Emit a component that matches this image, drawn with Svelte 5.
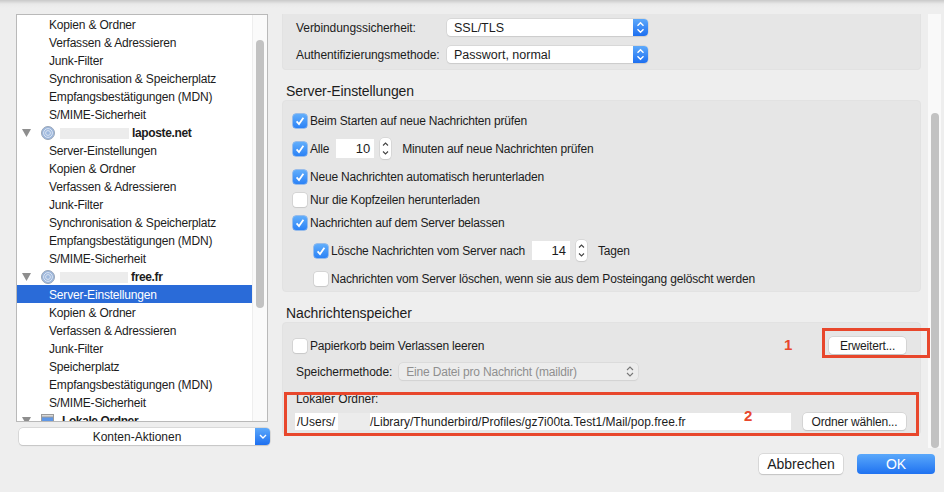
<script>
	const tree = [
		{label: "Kopien & Ordner"},
		{label: "Verfassen & Adressieren"},
		{label: "Junk-Filter"},
		{label: "Synchronisation & Speicherplatz"},
		{label: "Empfangsbestätigungen (MDN)"},
		{label: "S/MIME-Sicherheit"},
		{account: "laposte.net", blank: 69},
		{label: "Server-Einstellungen"},
		{label: "Kopien & Ordner"},
		{label: "Verfassen & Adressieren"},
		{label: "Junk-Filter"},
		{label: "Synchronisation & Speicherplatz"},
		{label: "Empfangsbestätigungen (MDN)"},
		{label: "S/MIME-Sicherheit"},
		{account: "free.fr", blank: 68},
		{label: "Server-Einstellungen", selected: true},
		{label: "Kopien & Ordner"},
		{label: "Verfassen & Adressieren"},
		{label: "Junk-Filter"},
		{label: "Speicherplatz"},
		{label: "Empfangsbestätigungen (MDN)"},
		{label: "S/MIME-Sicherheit"},
		{account: "Lokale Ordner", local: true},
	];
</script>

{#snippet check(on)}
	<span class="check" class:on>
		{#if on}
			<svg width="14" height="14" viewBox="0 0 14 14"><path d="M3.6 7.4 L6 10 L10.4 3.8" fill="none" stroke="#fff" stroke-width="1.8"/></svg>
		{/if}
	</span>
{/snippet}

{#snippet stepper()}
	<span class="stepper">
		<svg width="11" height="21" viewBox="0 0 11 21"><path d="M3 7.5 L5.5 5 L8 7.5 M3 13.5 L5.5 16 L8 13.5" fill="none" stroke="#444" stroke-width="1.1"/></svg>
	</span>
{/snippet}

{#snippet updown()}
	<svg width="15" height="17" viewBox="0 0 15 17"><path d="M4.5 6.8 L7.5 3.8 L10.5 6.8 M4.5 10.2 L7.5 13.2 L10.5 10.2" fill="none" stroke="#fff" stroke-width="1.4"/></svg>
{/snippet}

<div class="dialog">
	<div class="left">
		<div class="list">
			<div class="rows">
				{#each tree as row}
					{#if row.account}
						<div class="row account">
							<svg class="arrow" width="9" height="8" viewBox="0 0 9 8"><path d="M0 0 H9 L4.5 8 Z" fill="#8e8e8e"/></svg>
							{#if row.local}
								<svg class="icon" width="13" height="14" viewBox="0 0 13 14"><rect x="0.5" y="0.5" width="12" height="13" fill="#5f97e6" stroke="#9a9a9a"/><rect x="0.5" y="0.5" width="12" height="2.5" fill="#d8d8d8" stroke="#9a9a9a"/></svg>
							{:else}
								<svg class="icon" width="14" height="14" viewBox="0 0 14 14"><circle cx="7" cy="7" r="6.5" fill="#9db8de" stroke="#9aa6b8"/><circle cx="7" cy="7" r="4.4" fill="none" stroke="#dbe4f1"/><circle cx="7" cy="7" r="2.4" fill="none" stroke="#dbe4f1"/></svg>
							{/if}
							{#if row.blank}<span class="blank" style="width: {row.blank}px"></span>{/if}
							<b class:local={row.local}>{row.account}</b>
						</div>
					{:else}
						<div class="row" class:selected={row.selected}>{row.label}</div>
					{/if}
				{/each}
			</div>
			<div class="list-track"><div class="list-thumb"></div></div>
		</div>
		<div class="combo">
			<span>Konten-Aktionen</span>
			<span class="combo-btn">
				<svg width="14" height="17" viewBox="0 0 14 17"><path d="M4 7 L7 10 L10 7" fill="none" stroke="#fff" stroke-width="1.4"/></svg>
			</span>
		</div>
	</div>

	<div class="right">
		<div class="scroller">
			<div class="panel">
				<div class="group first">
					<div class="field">
						<span class="label">Verbindungssicherheit:</span>
						<span class="select"><span>SSL/TLS</span><span class="select-btn">{@render updown()}</span></span>
					</div>
					<div class="field">
						<span class="label">Authentifizierungsmethode:</span>
						<span class="select"><span>Passwort, normal</span><span class="select-btn">{@render updown()}</span></span>
					</div>
				</div>

				<h3>Server-Einstellungen</h3>
				<div class="group server">
					<div class="line">{@render check(true)}<span>Beim Starten auf neue Nachrichten prüfen</span></div>
					<div class="line spaced">
						{@render check(true)}<span>Alle</span>
						<span class="num">10</span>{@render stepper()}
						<span class="after">Minuten auf neue Nachrichten prüfen</span>
					</div>
					<div class="line spaced">{@render check(true)}<span>Neue Nachrichten automatisch herunterladen</span></div>
					<div class="line">{@render check(false)}<span>Nur die Kopfzeilen herunterladen</span></div>
					<div class="line">{@render check(true)}<span>Nachrichten auf dem Server belassen</span></div>
					<div class="line spaced indent">
						{@render check(true)}<span>Lösche Nachrichten vom Server nach</span>
						<span class="num">14</span>{@render stepper()}
						<span class="after">Tagen</span>
					</div>
					<div class="line spaced indent">{@render check(false)}<span>Nachrichten vom Server löschen, wenn sie aus dem Posteingang gelöscht werden</span></div>
				</div>

				<h3 class="store-title">Nachrichtenspeicher</h3>
				<div class="group store">
					<div class="store-top">
						<div class="line">{@render check(false)}<span>Papierkorb beim Verlassen leeren</span></div>
						<button class="erweitert">Erweitert...</button>
					</div>
					<div class="method">
						<span class="label-text">Speichermethode:</span>
						<span class="disabled-select">
							<span>Eine Datei pro Nachricht (maildir)</span>
							<svg width="10" height="13" viewBox="0 0 10 13"><path d="M2 5 L5 2 L8 5 M2 8 L5 11 L8 8" fill="none" stroke="#777" stroke-width="1.1"/></svg>
						</span>
					</div>
					<div class="folder-label">Lokaler Ordner:</div>
					<div class="folder">
						<span class="path">/Users/<span class="blank path-blank"></span>/Library/Thunderbird/Profiles/gz7i00ta.Test1/Mail/pop.free.fr</span>
						<button class="choose">Ordner wählen...</button>
					</div>
				</div>
			</div>
			<div class="track"><div class="thumb"></div></div>
		</div>
		<div class="footer">
			<button class="cancel">Abbrechen</button>
			<button class="ok">OK</button>
		</div>
	</div>

	<!-- annotations drawn over the screenshot -->
	<div class="mark mark-one"></div>
	<div class="mark mark-two"></div>
	<span class="digit digit-one">1</span>
	<span class="digit digit-two">2</span>
</div>

<style>
	:global(body) {
		margin: 0;
		background: #eee;
	}
	.dialog {
		position: relative;
		width: 944px;
		height: 492px;
		box-sizing: border-box;
		padding: 14px 0 0 16px;
		display: flex;
		overflow: hidden;
		background: linear-gradient(#c9c9c9, #e9e9e9 4px, #eee 8px);
		color: #1c1c1c;
		font-family: "Liberation Sans", Arial, sans-serif;
		font-size: 12px;
		letter-spacing: -0.18px;
	}
	.left {
		width: 266px;
		flex: none;
	}
	.list {
		box-sizing: border-box;
		width: 252px;
		height: 408px;
		display: flex;
		background: #fff;
		border: 1px solid #b9b9b9;
		overflow: hidden;
	}
	.rows {
		width: 235px;
		flex: none;
	}
	.row {
		height: 18px;
		line-height: 20px;
		padding-left: 32px;
		white-space: nowrap;
	}
	.row.selected {
		background: #2a6bd8;
		color: #fff;
	}
	.account {
		box-sizing: border-box;
		display: flex;
		align-items: center;
		padding: 2px 0 0 5px;
		line-height: 16px;
	}
	.arrow {
		margin-right: 10px;
	}
	.icon {
		margin-right: 5px;
	}
	.blank {
		display: inline-block;
		height: 11px;
		background: #ececec;
	}
	.account b {
		margin-left: 3px;
		letter-spacing: -0.35px;
	}
	.account b.local {
		margin-left: 3px;
		letter-spacing: -0.4px;
	}
	.list-track {
		flex: 1;
		background: #fafafa;
		border-left: 1px solid #eee;
		padding: 25px 3px 0 3px;
	}
	.list-thumb {
		width: 8px;
		height: 268px;
		border-radius: 4px;
		background: #c2c2c2;
	}
	.combo {
		box-sizing: border-box;
		width: 251px;
		height: 17px;
		margin: 6px 0 0 3px;
		display: flex;
		background: #fff;
		border-radius: 4px;
		box-shadow: 0 0 0 0.5px #c4c4c4, 0 1px 1px #c9c9c9;
		line-height: 19px;
		letter-spacing: 0;
		overflow: hidden;
	}
	.combo > span:first-child {
		flex: 1;
		text-align: center;
	}
	.combo-btn, .select-btn {
		width: 15px;
		flex: none;
		background: linear-gradient(#5da9fb, #1d6ff0);
		display: flex;
		align-items: center;
		justify-content: center;
	}
	.right {
		flex: 1;
		min-width: 0;
	}
	.scroller {
		display: flex;
		height: 434px;
	}
	.panel {
		width: 639px;
		flex: none;
	}
	.track {
		box-sizing: border-box;
		width: 13px;
		height: 434px;
		margin-left: 7px;
		padding: 99px 3px 0 3px;
		background: #f9f9f9;
	}
	.thumb {
		width: 8px;
		height: 335px;
		border-radius: 4px;
		background: #c2c2c2;
	}
	.group {
		box-sizing: border-box;
		background: #e6e6e6;
		border: 1px solid #e2e2e2;
		border-radius: 0 0 4px 4px;
	}
	.first {
		height: 56px;
		padding: 4px 0 0 13px;
		border-top: 0;
	}
	.field {
		display: flex;
		align-items: center;
		height: 18px;
		margin-bottom: 9px;
	}
	.label {
		width: 151px;
		flex: none;
		white-space: nowrap;
		letter-spacing: -0.07px;
		padding-top: 1px;
	}
	.select {
		width: 201px;
		height: 17px;
		display: flex;
		background: #fff;
		border-radius: 4px;
		box-shadow: 0 0 0 0.5px #c9c9c9, 0 1px 1px #cfcfcf;
		font-size: 12.5px;
		letter-spacing: 0;
		line-height: 18px;
		overflow: hidden;
	}
	.select > span:first-child {
		flex: 1;
		padding-left: 7px;
	}
	h3 {
		margin: 0;
		height: 30px;
		line-height: 42px;
		padding-left: 4px;
		font-size: 14px;
		font-weight: normal;
		letter-spacing: -0.1px;
	}
	.server {
		height: 192px;
		padding: 8px 0 0 10px;
		border-radius: 4px;
	}
	.line {
		display: flex;
		align-items: center;
		height: 23px;
		white-space: nowrap;
	}
	.spaced {
		margin-top: 5px;
	}
	.indent {
		margin-left: 21px;
	}
	.check {
		box-sizing: border-box;
		width: 14px;
		height: 14px;
		flex: none;
		margin-right: 3px;
		background: #fff;
		border-radius: 3px;
		box-shadow: 0 0 0 0.5px #c4c4c4, 0 1px 1px #cfcfcf;
		display: flex;
	}
	.check.on {
		background: linear-gradient(#62aefb, #2b82f6);
		box-shadow: 0 0 0 0.5px #4a92ee;
	}
	.num {
		box-sizing: border-box;
		width: 38px;
		height: 19px;
		margin-left: 7px;
		line-height: 19px;
		background: #fff;
		text-align: right;
		padding-right: 4px;
		font-size: 13px;
		letter-spacing: 0;
	}
	.stepper {
		width: 11px;
		height: 21px;
		margin-left: 6px;
		background: #fff;
		border-radius: 4px;
		box-shadow: 0 0 0 0.5px #c9c9c9, 0 1px 1px #cfcfcf;
		display: flex;
	}
	.after {
		margin-left: 11px;
	}
	.store-title {
		height: 30px;
		line-height: 43px;
	}
	.store {
		position: relative;
		height: 113px;
		padding: 11px 0 0 10px;
		border-radius: 4px;
	}
	.store-top {
		display: flex;
		align-items: center;
		justify-content: space-between;
		padding-right: 14px;
	}
	button {
		box-sizing: border-box;
		background: #fff;
		border: 0;
		border-radius: 4px;
		box-shadow: 0 0 0 0.5px #c6c6c6, 0 1px 1px #c4c4c4;
		font: inherit;
		color: inherit;
		letter-spacing: inherit;
		padding: 0;
	}
	.erweitert {
		width: 77px;
		height: 17px;
	}
	.method {
		display: flex;
		align-items: center;
		margin-top: 6px;
		padding-left: 3px;
	}
	.label-text {
		letter-spacing: -0.07px;
	}
	.disabled-select {
		box-sizing: border-box;
		width: 239px;
		height: 17px;
		margin-left: 7px;
		padding: 0 3px 0 7px;
		display: flex;
		align-items: center;
		justify-content: space-between;
		background: #ececec;
		border-radius: 4px;
		box-shadow: 0 0 0 0.5px #d0d0d0, 0 1px 1px #d6d6d6;
		color: #8f8f8f;
	}
	.folder-label {
		margin-top: 12px;
		padding-left: 3px;
		line-height: 14px;
		letter-spacing: -0.07px;
	}
	.folder {
		display: flex;
		margin-top: 7px;
		padding-left: 2px;
	}
	.path {
		box-sizing: border-box;
		width: 496px;
		height: 17px;
		line-height: 18px;
		padding-left: 2px;
		background: #fff;
		letter-spacing: 0;
		white-space: nowrap;
		overflow: hidden;
	}
	.path-blank {
		width: 32px;
		height: 17px;
		margin-left: 3px;
		vertical-align: top;
	}
	.choose {
		width: 103px;
		height: 17px;
		margin-left: 12px;
	}
	.footer {
		display: flex;
		justify-content: flex-end;
		gap: 14px;
		width: 653px;
		margin-top: 6px;
	}
	.footer button {
		height: 20px;
		font-size: 14px;
		letter-spacing: 0;
	}
	.cancel {
		width: 84px;
	}
	.ok {
		width: 78px;
		background: linear-gradient(#5aa8fb, #1f72f1);
		color: #fff;
		box-shadow: none;
	}
	.mark {
		position: absolute;
		box-sizing: border-box;
		border: 3px solid #e8472c;
	}
	.mark-one {
		left: 822px;
		top: 328px;
		width: 108px;
		height: 30px;
	}
	.mark-two {
		left: 284px;
		top: 392px;
		width: 635px;
		height: 44px;
	}
	.digit {
		position: absolute;
		color: #e8472c;
		font-size: 15px;
		font-weight: bold;
		letter-spacing: 0;
		line-height: 16px;
	}
	.digit-one {
		left: 784px;
		top: 337px;
	}
	.digit-two {
		left: 744px;
		top: 408px;
	}
</style>
